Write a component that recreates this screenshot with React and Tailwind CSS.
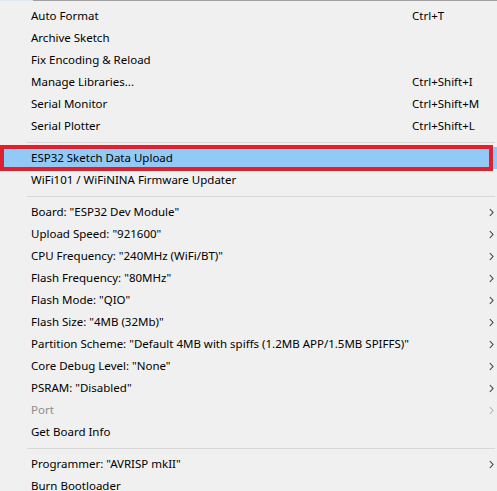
const groups = [
    [
        { label: "Auto Format", key: "Ctrl+T" },
        { label: "Archive Sketch" },
        { label: "Fix Encoding & Reload" },
        { label: "Manage Libraries...", key: "Ctrl+Shift+I" },
        { label: "Serial Monitor", key: "Ctrl+Shift+M" },
        { label: "Serial Plotter", key: "Ctrl+Shift+L" },
    ],
    [
        { label: "ESP32 Sketch Data Upload", active: true },
        { label: "WiFi101 / WiFiNINA Firmware Updater" },
    ],
    [
        { label: 'Board: "ESP32 Dev Module"', sub: true },
        { label: 'Upload Speed: "921600"', sub: true },
        { label: 'CPU Frequency: "240MHz (WiFi/BT)"', sub: true },
        { label: 'Flash Frequency: "80MHz"', sub: true },
        { label: 'Flash Mode: "QIO"', sub: true },
        { label: 'Flash Size: "4MB (32Mb)"', sub: true },
        { label: 'Partition Scheme: "Default 4MB with spiffs (1.2MB APP/1.5MB SPIFFS)"', sub: true },
        { label: 'Core Debug Level: "None"', sub: true },
        { label: 'PSRAM: "Disabled"', sub: true },
        { label: "Port", sub: true, disabled: true },
        { label: "Get Board Info" },
    ],
    [
        { label: 'Programmer: "AVRISP mkII"', sub: true },
        { label: "Burn Bootloader" },
    ],
];

const Chevron = ({ disabled }) => (
    <svg width="5" height="9" viewBox="0 0 5 9" className="shrink-0">
        <path d="M0.8 1 L4 4.5 L0.8 8" fill="none" stroke={disabled ? "#b4b4b4" : "#3c3c3c"} strokeWidth="1.1" />
    </svg>
);

const Item = ({ label, shortcut, sub, disabled, active }) => {
    const row = (
        <div className={`flex items-center h-[22px] pl-[31px] pr-[3px] ${active ? "bg-[#91c9f7]" : ""}`}>
            <span className={`flex-1 whitespace-nowrap ${disabled ? "text-[#8d8d8d]" : "text-[#000]"}`}>{label}</span>
            {shortcut && <span className="w-[82px] whitespace-nowrap">{shortcut}</span>}
            {sub && <Chevron disabled={disabled} />}
        </div>
    );

    if (!active) return row;

    return (
        <div className="relative">
            {row}
            <div className="absolute left-0 right-[4px] top-[-2px] bottom-[-2px] border-[4px] border-[#e0202c] pointer-events-none" />
        </div>
    );
};

const Separator = () => (
    <div className="h-[10px] flex items-center pl-[27px] pr-[2px]">
        <div className="w-full h-px bg-[#d7d7d7]" />
    </div>
);

export default function App() {
    return (
        <div
            className="w-[497px] h-[491px] overflow-hidden bg-[#f0f0f0] text-[11.5px] text-black"
            style={{ fontFamily: '"Noto Sans", "Open Sans", sans-serif' }}
        >
            <div className="flex h-px">
                <div className="w-[33px] bg-[#dfe8f2]" />
                <div className="flex-1 bg-[#a0a0a0]" />
            </div>
            <div className="pt-[4px]">
                {groups.map((g, i) => (
                    <div key={i}>
                        {i > 0 && <Separator />}
                        {g.map((it) => (
                            <Item key={it.label} {...it} shortcut={it.key} />
                        ))}
                    </div>
                ))}
            </div>
        </div>
    );
}
